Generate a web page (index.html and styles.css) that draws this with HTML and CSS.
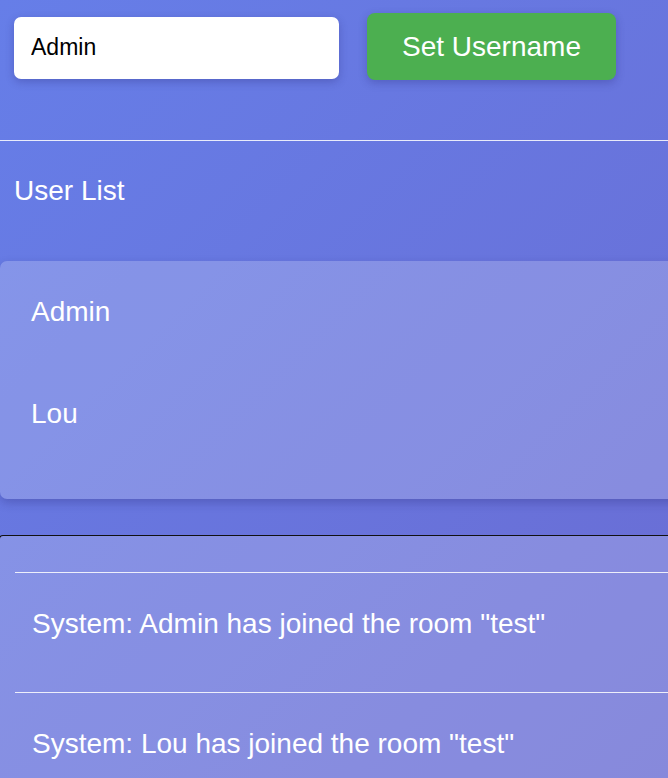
FILE: index.html
```html
<!DOCTYPE html>
<html lang="en">
<head>
<meta charset="utf-8">
<title>Chat</title>
<link rel="stylesheet" href="styles.css">
</head>
<body>
<div class="page">
  <div class="user-bar">
    <input class="name-input" type="text" value="Admin">
    <button class="set-btn">Set Username</button>
  </div>
  <hr class="rule">
  <h2 class="list-title">User List</h2>
  <ul class="user-list">
    <li class="user-item">Admin</li>
    <li class="user-item">Lou</li>
  </ul>
  <div class="messages">
    <div class="message">System: Admin has joined the room "test"</div>
    <div class="message">System: Lou has joined the room "test"</div>
  </div>
</div>
</body>
</html>
```
FILE: styles.css
```css
html, body {
  margin: 0;
  padding: 0;
  height: 100%;
  overflow: hidden;
}
body {
  background: linear-gradient(135deg, #667ee8 0%, #6a6cd3 100%);
  font-family: "Liberation Sans", Arial, sans-serif;
  color: #fff;
}
.page {
  width: 700px;
}
.user-bar {
  display: flex;
  align-items: flex-start;
  gap: 28px;
  padding: 13px 0 0 14px;
  height: 67px;
}
.name-input {
  box-sizing: border-box;
  width: 325px;
  height: 62px;
  margin-top: 4px;
  border: none;
  border-radius: 7px;
  padding: 0 17px 2px;
  font-family: "Liberation Sans", Arial, sans-serif;
  font-size: 23px;
  color: #000;
  background: #fff;
  box-shadow: 0 3px 8px rgba(40, 40, 120, 0.3);
  outline: none;
}
.set-btn {
  box-sizing: border-box;
  width: 249px;
  height: 67px;
  border: none;
  border-radius: 8px;
  background: #4caf50;
  color: #fff;
  font-family: "Liberation Sans", Arial, sans-serif;
  font-size: 28px;
  box-shadow: 0 3px 8px rgba(40, 40, 120, 0.3);
}
.rule {
  margin: 60px 0 0;
  border: none;
  border-top: 1px solid rgba(255, 255, 255, 0.85);
  height: 0;
}
.list-title {
  margin: 34px 0 0 14px;
  font-size: 28px;
  font-weight: normal;
  line-height: 32px;
}
.user-list {
  list-style: none;
  margin: 54px 0 0;
  padding: 0 0 34px;
  background: rgba(255, 255, 255, 0.2);
  border-radius: 7px;
  box-shadow: 0 4px 10px rgba(40, 40, 120, 0.3);
}
.user-item {
  padding: 35px 31px;
  font-size: 28px;
  line-height: 32px;
}
.messages {
  margin-top: 36px;
  border-top: 1px solid #111;
  border-left: 1px solid #111;
  border-top-left-radius: 4px;
  background: rgba(255, 255, 255, 0.2);
  padding: 36px 0 0 15px;
  display: flex;
  flex-direction: column;
  gap: 17px;
  min-height: 400px;
  margin-left: -1px;
}
.message {
  border-top: 1px solid rgba(255, 255, 255, 0.85);
  padding: 35px 17px;
  font-size: 28px;
  line-height: 32px;
}
```
